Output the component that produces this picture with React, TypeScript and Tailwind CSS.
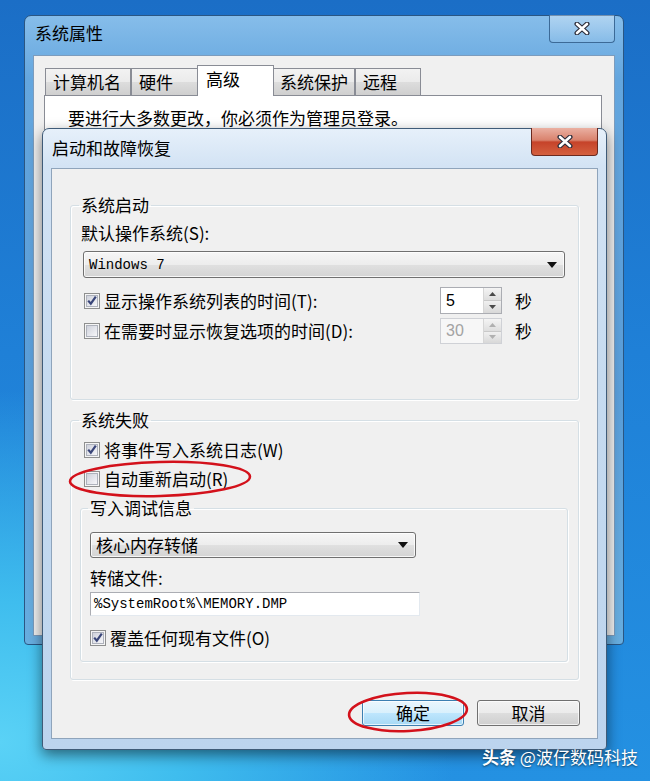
import React from "react";

const cjk = "font-['Noto_Sans_CJK_SC','Noto_Sans',sans-serif]";
const mono = "font-['Liberation_Mono','DejaVu_Sans_Mono',monospace]";

function CheckBox({ checked }: { checked?: boolean }) {
  return (
    <svg width="16" height="16" viewBox="0 0 16 16" className="shrink-0">
      <defs>
        <linearGradient id="cbfill" x1="0" y1="0" x2="1" y2="1">
          <stop offset="0" stopColor="#cdd0da" />
          <stop offset="1" stopColor="#f8f8fb" />
        </linearGradient>
      </defs>
      <rect x="0.5" y="0.5" width="15" height="15" fill="#f5f5f5" stroke="#8e8f8f" />
      <rect x="2.5" y="2.5" width="11" height="11" fill="url(#cbfill)" stroke="#aeb2bc" />
      {checked && (
        <path d="M4.2 7.6 L6.8 10.6 L11.8 3.6" fill="none" stroke="#3a4679" strokeWidth="2.2" />
      )}
    </svg>
  );
}

function Arrow() {
  return (
    <svg width="10" height="6" viewBox="0 0 10 6" className="shrink-0">
      <path d="M0 0 H10 L5 6 Z" fill="#111" />
    </svg>
  );
}

function Combo({ text, isMono, className }: { text: string; isMono?: boolean; className: string }) {
  return (
    <div
      className={`flex items-center rounded-[3px] border border-[#707070] bg-[linear-gradient(180deg,#f6f6f6_0%,#ededed_50%,#e0e0e0_51%,#d4d4d4_100%)] pl-[5px] pr-[7px] shadow-[inset_0_0_0_1px_rgba(255,255,255,0.8)] ${className}`}
    >
      <span className={`flex-1 ${isMono ? `${mono} text-[14px]` : `${cjk} text-[17px]`} leading-[20px] text-black`}>
        {text}
      </span>
      <Arrow />
    </div>
  );
}

function Spin({ value, disabled }: { value: string; disabled?: boolean }) {
  return (
    <div
      className={`flex w-[62px] self-stretch border ${
        disabled ? "border-[#cfd1d6] bg-[#f7f7f7] text-[#a3a3a3]" : "border-[#abadb3] bg-white text-black"
      }`}
    >
      <span className="flex flex-1 items-center pl-[5px] font-['Liberation_Sans',sans-serif] text-[16px]">{value}</span>
      <div className="flex w-[18px] flex-col border-l border-[#d6d6d6]">
        <div className="flex flex-1 items-center justify-center border-b border-[#c9c9c9] bg-[linear-gradient(180deg,#f4f4f4,#dedede)]">
          <svg width="7" height="4" viewBox="0 0 7 4">
            <path d="M0 4 L3.5 0 L7 4 Z" fill={disabled ? "#b0b0b0" : "#4a4a4a"} />
          </svg>
        </div>
        <div className="flex flex-1 items-center justify-center bg-[linear-gradient(180deg,#f0f0f0,#d8d8d8)]">
          <svg width="7" height="4" viewBox="0 0 7 4">
            <path d="M0 0 L7 0 L3.5 4 Z" fill={disabled ? "#b0b0b0" : "#4a4a4a"} />
          </svg>
        </div>
      </div>
    </div>
  );
}

function XGlyph() {
  return (
    <svg width="16" height="13" viewBox="0 0 16 13">
      <path d="M3 2 L13 11 M13 2 L3 11" stroke="#2d2d3a" strokeWidth="5" strokeLinecap="round" />
      <path d="M3 2 L13 11 M13 2 L3 11" stroke="#ffffff" strokeWidth="2.6" strokeLinecap="round" />
    </svg>
  );
}

const tabs = [
  { label: "计算机名", w: "w-[86px]" },
  { label: "硬件", w: "w-[68px]" },
  { label: "高级", w: "w-[77px]", active: true },
  { label: "系统保护", w: "w-[83px]" },
  { label: "远程", w: "w-[66px]" },
];

function OuterWindow() {
  return (
    <div className="absolute left-[24px] top-[15px] flex h-[630px] w-[600px] flex-col rounded-t-[7px] rounded-b-[4px] border border-[#2a5683] bg-[linear-gradient(180deg,#86bdea_0%,#64a6de_10%,#5a9ed9_60%,#68aee0_100%)] px-[8px] pb-[8px]">
      <div className="flex h-[39px] shrink-0 items-start justify-between">
        <span className={`${cjk} pl-[2px] pt-[7px] text-[17px] leading-[20px] text-black`}>系统属性</span>
        <div className="-mt-px flex h-[28px] w-[66px] items-center justify-center rounded-b-[4px] border border-t-0 border-[#3c6a97] bg-[linear-gradient(180deg,rgba(255,255,255,0.35),rgba(255,255,255,0.1))]">
          <XGlyph />
        </div>
      </div>
      <div className="flex flex-1 flex-col border border-[#7c9cbd] bg-[#f0f0f0] pl-[10px] pr-[12px] pt-[9px]">
        <div className="flex h-[30px] items-end pl-px">
          {tabs.map((t) =>
            t.active ? (
              <div
                key={t.label}
                className={`${t.w} ${cjk} relative z-10 -mx-[2px] -mb-px h-[31px] border border-b-0 border-[#898c95] bg-white pl-[8px] pt-[3px] text-[17px] leading-[20px] text-black`}
              >
                {t.label}
              </div>
            ) : (
              <div
                key={t.label}
                className={`${t.w} ${cjk} h-[27px] border border-b-0 border-[#898c95] bg-[linear-gradient(180deg,#f2f2f2_0%,#ebebeb_50%,#dddddd_51%,#cfcfcf_100%)] pl-[7px] pt-[3px] text-[17px] leading-[20px] text-black`}
              >
                {t.label}
              </div>
            )
          )}
        </div>
        <div className="mb-[40px] flex-1 border border-[#898c95] bg-white pl-[23px] pt-[12px]">
          <p className={`${cjk} text-[17px] leading-[20px] text-black`}>要进行大多数更改，你必须作为管理员登录。</p>
        </div>
      </div>
    </div>
  );
}

function CheckRow({ checked, label, className }: { checked?: boolean; label: string; className: string }) {
  return (
    <div className={`flex h-[20px] items-center gap-[4px] ${className}`}>
      <CheckBox checked={checked} />
      <span className={`${cjk} text-[17px] leading-[20px] text-black`}>{label}</span>
    </div>
  );
}

function Dialog() {
  return (
    <div className="absolute left-[42px] top-[128px] flex h-[622px] w-[565px] flex-col rounded-t-[7px] rounded-b-[4px] border border-[#3f5b78] bg-[linear-gradient(180deg,#e6f0fa_0%,#d3e3f4_6%,#c6dbf0_40%,#bcd4ee_100%)] px-[8px] pb-[10px] shadow-[0_5px_14px_rgba(0,0,0,0.5)]">
      <div className="flex h-[39px] shrink-0 items-start justify-between">
        <span className={`${cjk} pl-[1px] pt-[9px] text-[17px] leading-[20px] text-black`}>启动和故障恢复</span>
        <div className="-mt-px flex h-[28px] w-[67px] items-center justify-center rounded-b-[4px] border border-t-0 border-[#6b2a20] bg-[linear-gradient(180deg,#eab0a2_0%,#d9826d_45%,#c6432a_52%,#d4603f_100%)]">
          <XGlyph />
        </div>
      </div>
      <div className="flex flex-1 flex-col border border-[#8fa4bb] bg-[#f0f0f0]">
        {/* 系统启动 */}
        <fieldset className="mx-[18px] mt-[26px] h-[205px] rounded-[3px] border border-[#d5dfe5] px-[10px] shadow-[inset_1px_1px_0_#ffffff,1px_1px_0_#ffffff]">
          <legend className={`${cjk} -ml-[2px] px-[2px] text-[17px] leading-[20px] text-black`}>系统启动</legend>
          <div className={`${cjk} pt-[8px] text-[17px] leading-[20px] text-black`}>默认操作系统(S):</div>
          <Combo text="Windows 7" isMono className="ml-[2px] mr-[3px] mt-[8px] h-[27px]" />
          <div className="mt-[9px] flex h-[27px] items-center">
            <div className="flex w-[359px] items-center gap-[4px] pl-[3px]">
              <CheckBox checked />
              <span className={`${cjk} text-[17px] leading-[20px] text-black`}>显示操作系统列表的时间(T):</span>
            </div>
            <Spin value="5" />
            <span className={`${cjk} ml-[13px] text-[17px] leading-[20px] text-black`}>秒</span>
          </div>
          <div className="mt-[4px] flex h-[26px] items-center">
            <div className="flex w-[359px] items-center gap-[4px] pl-[3px]">
              <CheckBox />
              <span className={`${cjk} text-[17px] leading-[20px] text-black`}>在需要时显示恢复选项的时间(D):</span>
            </div>
            <Spin value="30" disabled />
            <span className={`${cjk} ml-[13px] text-[17px] leading-[20px] text-black`}>秒</span>
          </div>
        </fieldset>

        {/* 系统失败 */}
        <fieldset className="mx-[18px] mt-[10px] h-[270px] rounded-[3px] border border-[#d5dfe5] px-[10px] shadow-[inset_1px_1px_0_#ffffff,1px_1px_0_#ffffff]">
          <legend className={`${cjk} -ml-[2px] px-[2px] text-[17px] leading-[20px] text-black`}>系统失败</legend>
          <CheckRow checked label="将事件写入系统日志(W)" className="ml-[3px] mt-[10px]" />
          <CheckRow label="自动重新启动(R)" className="ml-[3px] mt-[9px]" />
          <fieldset className="-ml-px mt-[9px] h-[164px] rounded-[3px] border border-[#d5dfe5] px-[9px] shadow-[inset_1px_1px_0_#ffffff,1px_1px_0_#ffffff]">
            <legend className={`${cjk} -ml-[2px] px-[2px] text-[17px] leading-[20px] text-black`}>写入调试信息</legend>
            <Combo text="核心内存转储" className="mt-[14px] h-[26px] w-[326px]" />
            <div className={`${cjk} mt-[10px] text-[17px] leading-[20px] text-black`}>转储文件:</div>
            <div className={`${mono} mt-[4px] flex h-[24px] w-[330px] items-center border border-[#abadb3] border-r-[#e3e9ef] border-b-[#e3e9ef] bg-white pl-[3px] text-[14px] text-black`}>
              %SystemRoot%\MEMORY.DMP
            </div>
            <CheckRow checked label="覆盖任何现有文件(O)" className="mt-[12px]" />
          </fieldset>
        </fieldset>

        <div className="mt-[20px] flex justify-end gap-[13px] pr-[17px]">
          <button className={`${cjk} h-[26px] w-[102px] rounded-[3px] border border-[#3c7fb1] bg-[linear-gradient(180deg,#eaf6fd_0%,#d9f0fc_50%,#bee6fd_51%,#a7d9f5_100%)] text-[17px] leading-[20px] text-black shadow-[inset_0_0_0_1px_rgba(255,255,255,0.7)]`}>
            确定
          </button>
          <button className={`${cjk} h-[26px] w-[103px] rounded-[3px] border border-[#707070] bg-[linear-gradient(180deg,#f2f2f2_0%,#ebebeb_50%,#dddddd_51%,#cfcfcf_100%)] text-[17px] leading-[20px] text-black shadow-[inset_0_0_0_1px_rgba(255,255,255,0.7)]`}>
            取消
          </button>
        </div>
      </div>
    </div>
  );
}

export default function App() {
  return (
    <div className="relative h-[781px] w-[650px] overflow-hidden bg-[radial-gradient(ellipse_70%_45%_at_0%_95%,#5ad2f6_0%,#3fbdee_40%,rgba(40,150,225,0)_100%),linear-gradient(180deg,#1b6ec6_0%,#1f80d7_45%,#2491e2_100%)]">
      <OuterWindow />
      <Dialog />

      {/* red marks */}
      <svg className="absolute left-[66px] top-[458px]" width="188" height="42" viewBox="0 0 188 42">
        <ellipse cx="94" cy="21" rx="90" ry="17" fill="none" stroke="#d3111b" strokeWidth="2.6" transform="rotate(-1.5 94 21)" />
      </svg>
      <svg className="absolute left-[345px] top-[689px]" width="127" height="46" viewBox="0 0 127 46">
        <ellipse cx="63" cy="23" rx="59" ry="19" fill="none" stroke="#d3111b" strokeWidth="2.6" transform="rotate(-3 63 23)" />
      </svg>

      <div className={`${cjk} absolute left-[482px] top-[746px] text-[17px] leading-[22px] text-white [text-shadow:0_1px_2px_rgba(0,0,0,0.55)]`}>
        <span className="font-bold">头条</span> @波仔数码科技
      </div>
    </div>
  );
}
